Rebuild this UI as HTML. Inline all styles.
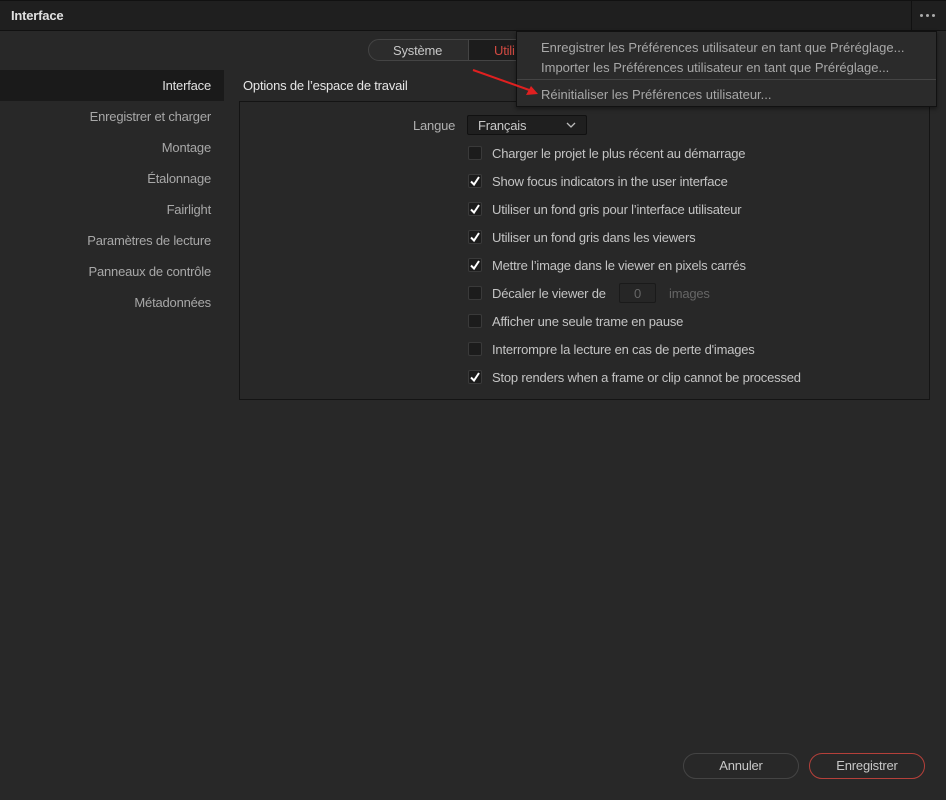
<!DOCTYPE html>
<html><head><meta charset="utf-8"><style>
*{box-sizing:border-box;margin:0;padding:0}
body{width:946px;height:800px;background:#282828;font-family:"Liberation Sans",sans-serif;font-size:13px;color:#c8c8c8;position:relative;overflow:hidden;letter-spacing:-0.2px}
.abs{position:absolute;white-space:nowrap}
#title{left:0;top:0;width:946px;height:31px;background:#1f1f1f;border-bottom:1px solid #111;border-top:1px solid #111}
#title .t{left:11px;top:7px;color:#e0e0e0;font-weight:bold;font-size:13px}
#dots{left:911px;top:0;width:35px;height:30px;border-left:1px solid #111}
.dot{position:absolute;top:14px;width:3px;height:3px;border-radius:50%;background:#aaa}
#seg{left:368px;top:39px;width:170px;height:22px;border:1px solid #444;border-radius:11px;background:#2c2c2c;overflow:hidden}
.side{right:735px;color:#a8a8a8}
#sel{left:0;top:70px;width:224px;height:31px;background:#1a1a1a}
#box{left:239px;top:101px;width:691px;height:299px;border:1px solid #141414;background:#282828}
.cb{position:absolute;left:468px;width:14px;height:14px;border:1px solid #3a3a3a;background:#1c1c1c;border-radius:2px}
.cb svg{position:absolute;left:-1px;top:-1px}
.lbl{left:492px;color:#c4c4c4}
#menu{left:516px;top:31px;width:421px;height:76px;background:#2b2b2b;border:1px solid #111;box-shadow:0 2px 4px rgba(0,0,0,.4)}
#menu span{letter-spacing:0}
.btn{position:absolute;top:753px;height:26px;border-radius:13px;text-align:center;line-height:24px;color:#c8c8c8}
</style></head><body>
<div id="title" class="abs"><span class="abs t">Interface</span></div>
<div id="dots" class="abs"><span class="dot" style="left:8px"></span><span class="dot" style="left:14px"></span><span class="dot" style="left:20px"></span></div>

<div id="seg" class="abs"><span class="abs" style="left:24px;top:3px;color:#c8c8c8">Système</span><div class="abs" style="left:99px;top:0;width:80px;height:22px;background:#1c1c1c;border-left:1px solid #444"></div><span class="abs" style="left:125px;top:3px;color:#d24a42">Utili</span></div>

<div id="sel" class="abs"></div>
<span class="abs side" style="top:78px;color:#e0e0e0">Interface</span>
<span class="abs side" style="top:109px">Enregistrer et charger</span>
<span class="abs side" style="top:140px">Montage</span>
<span class="abs side" style="top:171px">Étalonnage</span>
<span class="abs side" style="top:202px">Fairlight</span>
<span class="abs side" style="top:233px">Paramètres de lecture</span>
<span class="abs side" style="top:264px">Panneaux de contrôle</span>
<span class="abs side" style="top:295px">Métadonnées</span>

<span class="abs" style="left:243px;top:78px;color:#e6e6e6">Options de l’espace de travail</span>
<div id="box" class="abs"></div>
<span class="abs" style="left:413px;top:118px;color:#b0b0b0">Langue</span>
<div class="abs" style="left:467px;top:115px;width:120px;height:20px;border:1px solid #111;background:#1f1f1f;border-radius:2px"><span class="abs" style="left:10px;top:2px;color:#c8c8c8">Français</span><svg class="abs" style="left:98px;top:6px" width="10" height="7"><path d="M1 1L5 5L9 1" stroke="#bbb" stroke-width="1.3" fill="none"/></svg></div>

<div class="cb" style="top:146px"></div><span class="abs lbl" style="top:146px">Charger le projet le plus récent au démarrage</span>
<div class="cb" style="top:174px"><svg width="14" height="14"><path d="M3 7.5L6 10.5L11 3" stroke="#fff" stroke-width="2" fill="none"/></svg></div><span class="abs lbl" style="top:174px">Show focus indicators in the user interface</span>
<div class="cb" style="top:202px"><svg width="14" height="14"><path d="M3 7.5L6 10.5L11 3" stroke="#fff" stroke-width="2" fill="none"/></svg></div><span class="abs lbl" style="top:202px">Utiliser un fond gris pour l’interface utilisateur</span>
<div class="cb" style="top:230px"><svg width="14" height="14"><path d="M3 7.5L6 10.5L11 3" stroke="#fff" stroke-width="2" fill="none"/></svg></div><span class="abs lbl" style="top:230px">Utiliser un fond gris dans les viewers</span>
<div class="cb" style="top:258px"><svg width="14" height="14"><path d="M3 7.5L6 10.5L11 3" stroke="#fff" stroke-width="2" fill="none"/></svg></div><span class="abs lbl" style="top:258px">Mettre l’image dans le viewer en pixels carrés</span>
<div class="cb" style="top:286px"></div><span class="abs lbl" style="top:286px">Décaler le viewer de</span>
<div class="abs" style="left:619px;top:283px;width:37px;height:20px;border:1px solid #1a1a1a;background:#262626;border-radius:2px"><span class="abs" style="left:14px;top:2px;color:#666">0</span></div>
<span class="abs" style="left:669px;top:286px;color:#666">images</span>
<div class="cb" style="top:314px"></div><span class="abs lbl" style="top:314px">Afficher une seule trame en pause</span>
<div class="cb" style="top:342px"></div><span class="abs lbl" style="top:342px">Interrompre la lecture en cas de perte d'images</span>
<div class="cb" style="top:370px"><svg width="14" height="14"><path d="M3 7.5L6 10.5L11 3" stroke="#fff" stroke-width="2" fill="none"/></svg></div><span class="abs lbl" style="top:370px">Stop renders when a frame or clip cannot be processed</span>

<div id="menu" class="abs">
<span class="abs" style="left:24px;top:8px;color:#a8a8a8">Enregistrer les Préférences utilisateur en tant que Préréglage...</span>
<span class="abs" style="left:24px;top:28px;color:#a8a8a8">Importer les Préférences utilisateur en tant que Préréglage...</span>
<div class="abs" style="left:0;top:47px;width:419px;height:1px;background:#444"></div>
<span class="abs" style="left:24px;top:55px;color:#a8a8a8">Réinitialiser les Préférences utilisateur...</span>
</div>
<svg class="abs" style="left:470px;top:68px" width="72" height="30"><path d="M3 2L62 23" stroke="#e02020" stroke-width="2"/><path d="M68 26L56 27L61 18Z" fill="#e02020"/></svg>

<div class="btn" style="left:683px;width:116px;border:1px solid #444">Annuler</div>
<div class="btn" style="left:809px;width:116px;border:1px solid #b5403a">Enregistrer</div>
</body></html>
